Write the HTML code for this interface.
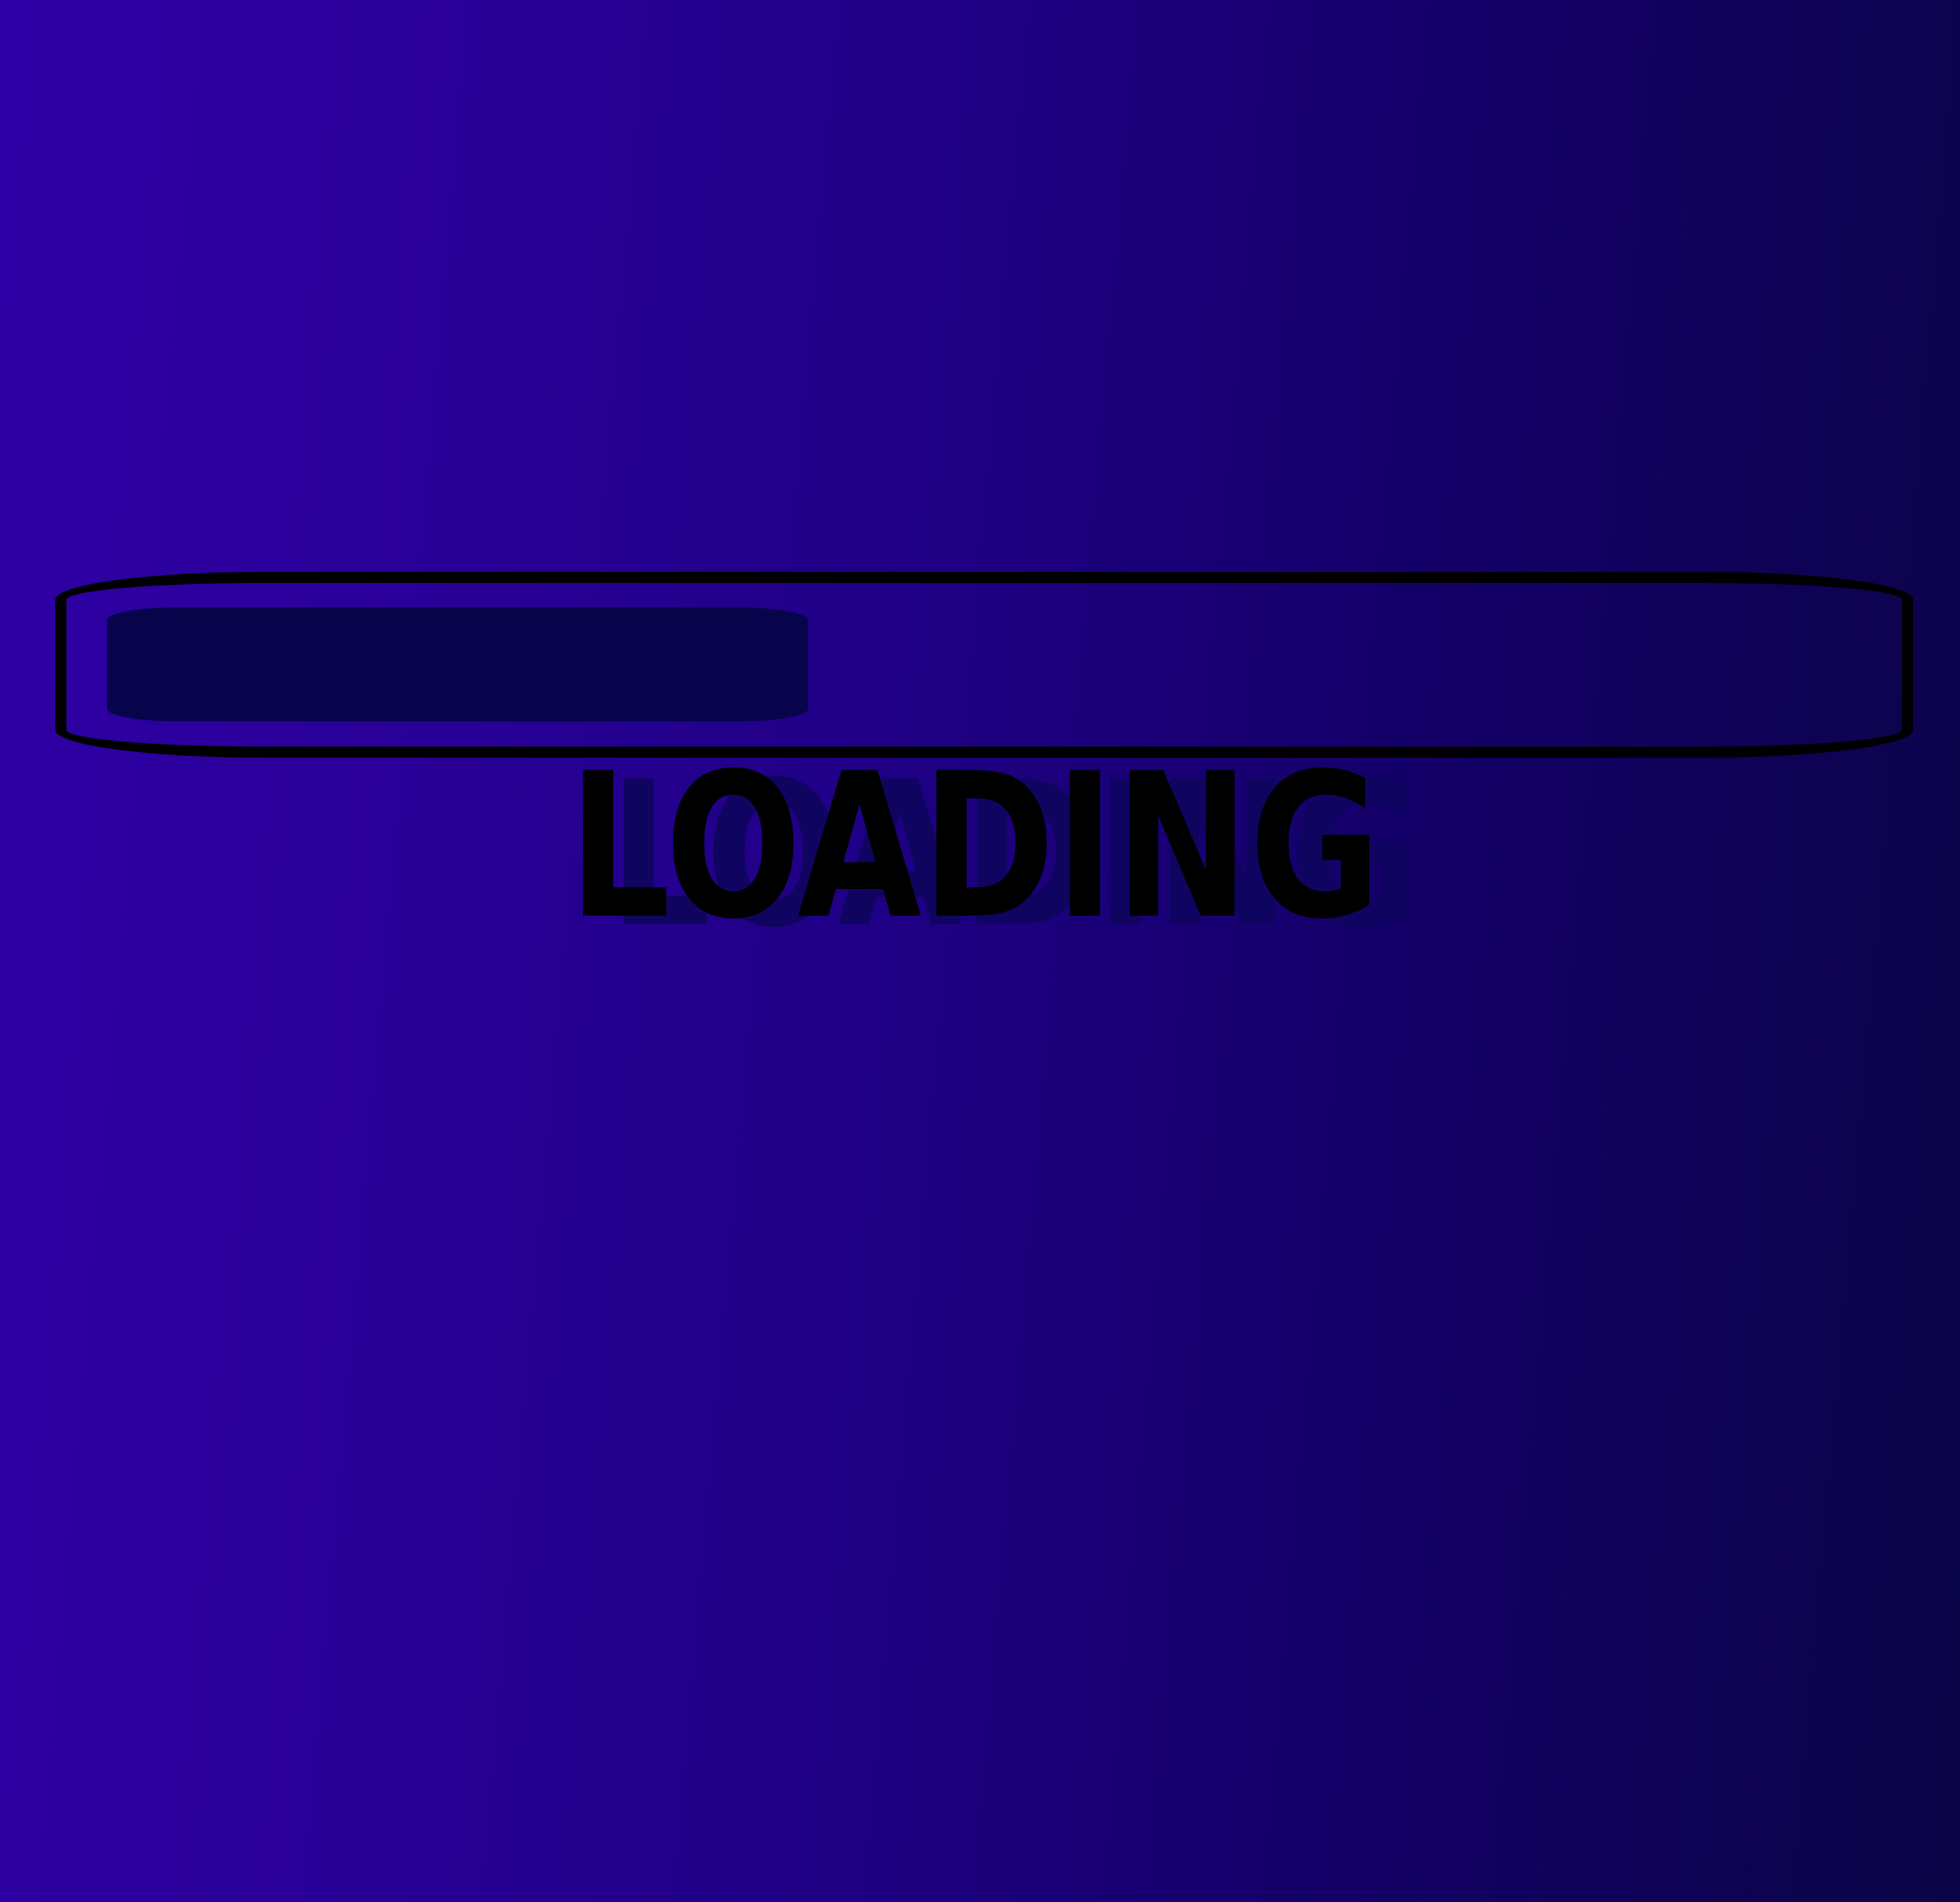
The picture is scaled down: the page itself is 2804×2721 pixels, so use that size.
<!DOCTYPE html>
<html><head><meta charset="utf-8"><style>
html,body{margin:0;padding:0}
body{width:2804px;height:2721px;overflow:hidden;background:linear-gradient(95deg,#2f00a6 0%,#2a0099 20%,#1f0085 45%,#140068 70%,#0a0446 100%);position:relative}
.bar{position:absolute;left:79px;top:818px;width:2658px;height:266px;box-sizing:border-box;border:16px solid #000;border-radius:300px/40px}
.fill{position:absolute;left:153px;top:869px;width:1003px;height:163px;background:#07044c;border-radius:100px/18px}
svg{position:absolute;left:0;top:0}
</style></head><body>
<div class="bar"></div>
<div class="fill"></div>
<svg width="2804" height="2721">
<text x="871" y="1322" textLength="1163" lengthAdjust="spacingAndGlyphs" font-family="DejaVu Sans" font-weight="bold" font-size="286" fill="#0f0560">LOADING</text>
<text x="813" y="1310" textLength="1163" lengthAdjust="spacingAndGlyphs" font-family="DejaVu Sans" font-weight="bold" font-size="286" fill="#000">LOADING</text>
</svg>
</body></html>
